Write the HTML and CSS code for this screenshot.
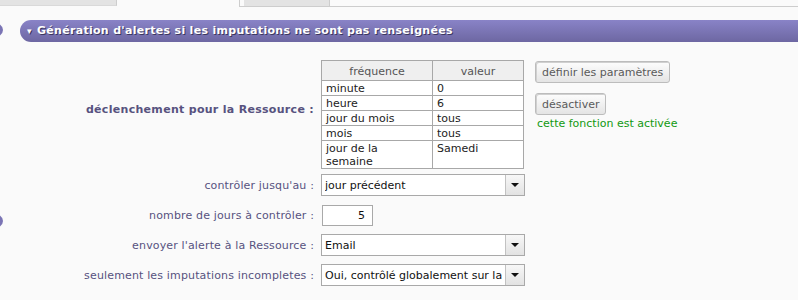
FILE: index.html
```html
<!DOCTYPE html>
<html lang="fr">
<head>
    <meta charset="UTF-8">
    <title>Alertes imputations</title>
    <link rel="stylesheet" href="styles.css">
</head>
<body>
    <div class="tabs">
        <div class="tab"></div>
        <div class="tab active"></div>
        <div class="tab-line">
            <div class="tab small"></div>
        </div>
    </div>

    <div class="page">
        <span class="side-knob top"></span>
        <span class="side-knob bottom"></span>

        <h2 class="section-title"><span class="caret">&#9662;</span> Génération d'alertes si les imputations ne sont pas renseignées</h2>

        <div class="form">
            <label class="field-label strong trigger-label">déclenchement pour la Ressource :</label>
            <div class="trigger">
                <table class="cron">
                    <thead>
                        <tr><th class="col-freq">fréquence</th><th>valeur</th></tr>
                    </thead>
                    <tbody>
                        <tr><td>minute</td><td>0</td></tr>
                        <tr><td>heure</td><td>6</td></tr>
                        <tr><td>jour du mois</td><td>tous</td></tr>
                        <tr><td>mois</td><td>tous</td></tr>
                        <tr><td>jour de la semaine</td><td>Samedi</td></tr>
                    </tbody>
                </table>
                <div class="actions">
                    <button class="btn" type="button">définir les paramètres</button>
                    <button class="btn" type="button">désactiver</button>
                    <div class="status">cette fonction est activée</div>
                </div>
            </div>

            <label class="field-label">contrôler jusqu'au :</label>
            <div class="field">
                <div class="combo">
                    <select><option>jour précédent</option></select>
                    <span class="combo-arrow"></span>
                </div>
            </div>

            <label class="field-label">nombre de jours à contrôler :</label>
            <div class="field">
                <input class="num" type="text" value="5">
            </div>

            <label class="field-label">envoyer l'alerte à la Ressource :</label>
            <div class="field">
                <div class="combo">
                    <select><option>Email</option></select>
                    <span class="combo-arrow"></span>
                </div>
            </div>

            <label class="field-label">seulement les imputations incompletes :</label>
            <div class="field">
                <div class="combo">
                    <select><option>Oui, contrôlé globalement sur la période</option></select>
                    <span class="combo-arrow"></span>
                </div>
            </div>
        </div>
    </div>
</body>
</html>
```

FILE: styles.css
```css
:root {
    --bg: #fafafa;
    --label: #57527f;
    --tab-bg: #e3e3e3;
    --tab-border: #cdcdcd;
    --field-border: #a9a9a9;
}

* {
    box-sizing: border-box;
    margin: 0;
    padding: 0;
}

body {
    background: var(--bg);
    font-family: "DejaVu Sans", Verdana, sans-serif;
    font-size: 11px;
    color: #222;
    overflow: hidden;
}

/* top tab strip */
.tabs {
    display: flex;
    height: 7px;
}

.tab {
    width: 117px;
    height: 6px;
    background: var(--tab-bg);
    border-right: 1px solid var(--tab-border);
    border-bottom: 1px solid #d9d9d9;
}

.tab.active {
    width: 122px;
    height: 7px;
    background: var(--bg);
    border: 0;
}

.tab-line {
    flex: 1;
    height: 7px;
    border-left: 1px solid var(--tab-border);
    border-bottom: 1px solid var(--tab-border);
    padding-left: 4px;
}

.tab.small {
    width: 86px;
    height: 6px;
    border-bottom: 0;
}

/* page */
.page {
    position: relative;
    padding-top: 13px;
}

.side-knob {
    position: absolute;
    left: -19px;
    width: 22px;
    height: 16px;
    border-radius: 50%;
    background: #7a74b4;
}

.side-knob.top {
    top: 15px;
}

.side-knob.bottom {
    top: 206px;
}

.section-title {
    margin-left: 20px;
    height: 22px;
    line-height: 22px;
    padding-left: 7px;
    border-radius: 11px 0 0 11px;
    background: linear-gradient(#8983c7, #6d67a2);
    color: #fff;
    font-size: 11px;
    font-weight: bold;
    letter-spacing: 0.3px;
    text-shadow: 1px 1px 0 #3b3760;
    white-space: nowrap;
}

.caret {
    font-size: 9px;
    margin-right: 1px;
}

/* form grid */
.form {
    display: grid;
    grid-template-columns: 321px 1fr;
    grid-template-rows: 110px;
    grid-auto-rows: 30px;
    margin-top: 18px;
}

.field-label {
    align-self: center;
    text-align: right;
    padding-right: 7px;
    color: var(--label);
    letter-spacing: 0.15px;
    white-space: nowrap;
}

.field-label.strong {
    font-weight: bold;
    letter-spacing: 0.3px;
}

.trigger-label {
    margin-bottom: 12px;
}

.field {
    display: flex;
    align-items: center;
}

.trigger {
    display: flex;
    align-items: flex-start;
}

/* frequency table */
.cron {
    width: 203px;
    border-collapse: collapse;
    border: 1px solid #9a9a9a;
    background: #fff;
    table-layout: fixed;
}

.cron th,
.cron td {
    border: 1px solid #a8a8a8;
    text-align: left;
    vertical-align: top;
    padding: 1px 4px 0;
    line-height: 13px;
    font-weight: normal;
}

.cron th {
    height: 20px;
    text-align: center;
    vertical-align: middle;
    background: #efefef;
    color: #555;
}

.cron td {
    height: 15px;
}

.cron .col-freq {
    width: 111px;
}

.cron td:first-child {
    padding-right: 10px;
}

/* buttons column */
.actions {
    margin-left: 11px;
    display: flex;
    flex-direction: column;
    align-items: flex-start;
}

.btn {
    height: 22px;
    padding: 0 6px;
    margin-top: 1px;
    margin-bottom: 9px;
    border: 1px solid #bcbcbc;
    border-radius: 3px;
    background: linear-gradient(#fdfdfd, #e4e4e4);
    color: #5a5a5a;
    font-family: inherit;
    font-size: 11px;
    box-shadow: inset 1px 1px 0 #d0d0d0;
}

.btn + .btn {
    margin-bottom: 2px;
}

.status {
    padding-left: 2px;
    color: #119911;
}

/* selects and inputs */
.combo {
    display: flex;
    width: 204px;
    height: 22px;
    border: 1px solid var(--field-border);
    background: #fff;
}

.combo select {
    flex: 1;
    min-width: 0;
    appearance: none;
    border: 0;
    outline: 0;
    background: transparent;
    padding-left: 3px;
    font-family: inherit;
    font-size: 11px;
    color: #111;
}

.combo-arrow {
    width: 19px;
    border-left: 1px solid #c2c2c2;
    background: linear-gradient(#f7f7f7, #e2e2e2);
    display: flex;
    align-items: center;
    justify-content: center;
}

.combo-arrow::after {
    content: '';
    border-left: 4px solid transparent;
    border-right: 4px solid transparent;
    border-top: 4px solid #111;
}

.num {
    width: 51px;
    height: 21px;
    margin-left: 1px;
    border: 1px solid var(--field-border);
    background: #fff;
    text-align: right;
    padding-right: 7px;
    font-family: inherit;
    font-size: 11px;
    color: #111;
}
```
